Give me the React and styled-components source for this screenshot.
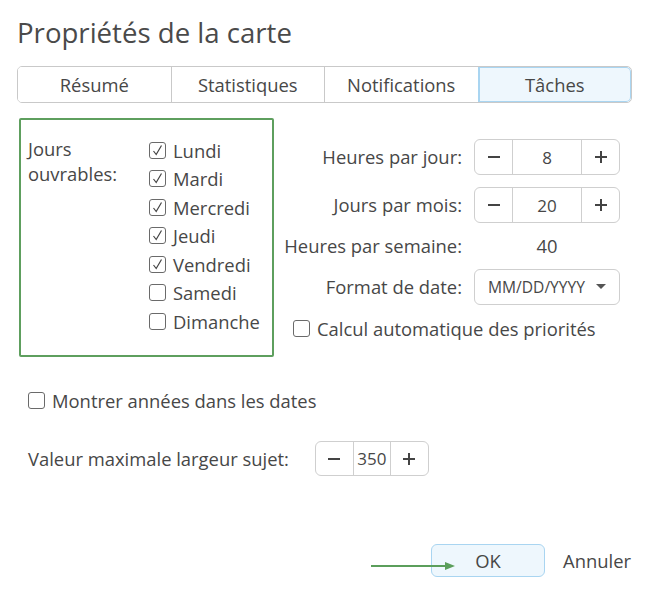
import React from 'react'
import styled, { createGlobalStyle } from 'styled-components'

const GlobalStyle = createGlobalStyle`
  body {
    margin: 0;
    background: #fff;
    font-family: "Open Sans", "Noto Sans", sans-serif;
    color: #474747;
  }
`

const days = [
  { name: 'Lundi', on: true },
  { name: 'Mardi', on: true },
  { name: 'Mercredi', on: true },
  { name: 'Jeudi', on: true },
  { name: 'Vendredi', on: true },
  { name: 'Samedi', on: false },
  { name: 'Dimanche', on: false },
]

const tabs = ['Résumé', 'Statistiques', 'Notifications', 'Tâches']

const Check = ({ checked }) => (
  <Box>
    {checked && (
      <svg width="13" height="13" viewBox="0 0 13 13">
        <path d="M2.5 7 L5.2 10.5 L10.5 1.5" fill="none" stroke="#444" strokeWidth="1.2" />
      </svg>
    )}
  </Box>
)

const Spinner = ({ value, small }) => (
  <SpinBox small={small}>
    <SpinBtn>
      <svg width="14" height="14" viewBox="0 0 14 14"><path d="M1 7h12" stroke="#444" strokeWidth="2" /></svg>
    </SpinBtn>
    <SpinValue>{value}</SpinValue>
    <SpinBtn>
      <svg width="14" height="14" viewBox="0 0 14 14"><path d="M1 7h12M7 1v12" stroke="#444" strokeWidth="2" /></svg>
    </SpinBtn>
  </SpinBox>
)

const App = () => {
  return (
    <Page>
      <GlobalStyle />
      <Title>Propriétés de la carte</Title>
      <Tabs>
        {tabs.map((t, i) => (
          <Tab key={t} active={i === 3}>{t}</Tab>
        ))}
      </Tabs>

      <Content>
        <DaysPanel>
          <DaysLabel>
            <span>Jours</span>
            <span>ouvrables:</span>
          </DaysLabel>
          <DayList>
            {days.map(d => (
              <CheckRow key={d.name}>
                <Check checked={d.on} />
                {d.name}
              </CheckRow>
            ))}
          </DayList>
        </DaysPanel>

        <Settings>
          <Label>Heures par jour:</Label>
          <Spinner value="8" />
          <Label>Jours par mois:</Label>
          <Spinner value="20" />
          <Label>Heures par semaine:</Label>
          <Plain>40</Plain>
          <Label>Format de date:</Label>
          <Select>
            MM/DD/YYYY
            <svg width="10" height="6" viewBox="0 0 10 6"><path d="M0 0h10L5 5z" fill="#555" /></svg>
          </Select>
          <Wide>
            <CheckRow>
              <Check />
              Calcul automatique des priorités
            </CheckRow>
          </Wide>
        </Settings>
      </Content>

      <YearsRow>
        <Check />
        Montrer années dans les dates
      </YearsRow>

      <WidthRow>
        <span>Valeur maximale largeur sujet:</span>
        <Spinner value="350" small />
      </WidthRow>

      <Footer>
        <OkButton>
          OK
          <Arrow width="90" height="10" viewBox="0 0 90 10">
            <path d="M0 5h76" stroke="#5b9e5b" strokeWidth="2" />
            <path d="M74 1 L84 5 L74 9z" fill="#5b9e5b" />
          </Arrow>
        </OkButton>
        <CancelButton>Annuler</CancelButton>
      </Footer>
    </Page>
  )
}

export default App

const Page = styled.div`
  width: 650px;
  height: 595px;
  box-sizing: border-box;
  padding: 13px 18px 0 17px;
  font-size: 18.4px;
`

const Title = styled.h1`
  margin: 0;
  font-size: 27.6px;
  font-weight: 400;
  line-height: 38px;
  color: #4a4a4a;
`

const Tabs = styled.div`
  display: flex;
  margin-top: 15px;
  width: 615px;
  height: 37px;
  box-sizing: border-box;
  border: 1px solid #c9c9c9;
  border-radius: 5px;
  overflow: hidden;
`

const Tab = styled.div`
  flex: 1;
  display: flex;
  align-items: center;
  justify-content: center;
  font-size: 18.4px;
  color: #474747;
  background: ${p => (p.active ? '#eef7fd' : '#fff')};
  border-left: 1px solid ${p => (p.active ? '#a9d5f1' : '#c9c9c9')};
  ${p => p.active && 'box-shadow: inset 0 0 0 1px #a9d5f1; border-radius: 0 5px 5px 0;'}
  &:first-child {
    border-left: none;
  }
`

const Content = styled.div`
  display: flex;
  margin-top: 15px;
  margin-left: 2px;
`

const DaysPanel = styled.div`
  width: 255px;
  height: 239px;
  box-sizing: border-box;
  border: 2px solid #5e9f5e;
  border-radius: 2px;
  padding: 16px 0 0 7px;
  display: flex;
`

const DaysLabel = styled.div`
  width: 121px;
  display: flex;
  flex-direction: column;
  line-height: 25px;
  margin-top: 0;
`

const DayList = styled.div`
  display: flex;
  flex-direction: column;
`

const CheckRow = styled.label`
  display: flex;
  align-items: center;
  gap: 7px;
  height: 28.5px;
  white-space: nowrap;
`

const Box = styled.span`
  width: 17px;
  height: 17px;
  box-sizing: border-box;
  border: 1px solid #6a6a6a;
  border-radius: 3px;
  display: inline-flex;
  align-items: center;
  justify-content: center;
  flex-shrink: 0;
`

const Settings = styled.div`
  margin: 21px 0 0 10px;
  display: grid;
  grid-template-columns: 178px 146px;
  column-gap: 12px;
  row-gap: 12px;
  align-items: center;
  align-content: start;
`

const Label = styled.div`
  text-align: right;
  white-space: nowrap;
  line-height: 22px;
`

const Plain = styled.div`
  text-align: center;
  line-height: 22px;
`

const SpinBox = styled.div`
  display: flex;
  width: ${p => (p.small ? '114px' : '146px')};
  height: ${p => (p.small ? '35px' : '36px')};
  box-sizing: border-box;
  border: 1px solid #cfcfcf;
  border-radius: 6px;
`

const SpinBtn = styled.div`
  width: 37px;
  display: flex;
  align-items: center;
  justify-content: center;
  flex-shrink: 0;
`

const SpinValue = styled.div`
  flex: 1;
  display: flex;
  align-items: center;
  justify-content: center;
  border-left: 1px solid #cfcfcf;
  border-right: 1px solid #cfcfcf;
  font-size: 17px;
`

const Select = styled.div`
  height: 36px;
  box-sizing: border-box;
  border: 1px solid #cfcfcf;
  border-radius: 6px;
  display: flex;
  align-items: center;
  justify-content: space-between;
  padding: 0 13px 0 13px;
  font-size: 15.6px;
`

const Wide = styled.div`
  grid-column: 1 / 3;
  padding-left: 9px;
  margin-top: -3px;
`

const YearsRow = styled(CheckRow)`
  margin: 29px 0 0 11px;
  height: 28px;
`

const WidthRow = styled.div`
  display: flex;
  align-items: center;
  gap: 26px;
  margin: 27px 0 0 11px;
`

const Footer = styled.div`
  display: flex;
  justify-content: flex-end;
  align-items: center;
  gap: 18px;
  margin-top: 68px;
`

const OkButton = styled.button`
  position: relative;
  width: 114px;
  height: 33px;
  font-family: inherit;
  font-size: 18.4px;
  color: #474747;
  background: #eef7fd;
  border: 1px solid #a9d5f1;
  border-radius: 6px;
`

const Arrow = styled.svg`
  position: absolute;
  left: -61px;
  top: 16px;
`

const CancelButton = styled.button`
  font-family: inherit;
  font-size: 18.4px;
  color: #474747;
  background: none;
  border: none;
  padding: 0;
  margin-right: 1px;
`
